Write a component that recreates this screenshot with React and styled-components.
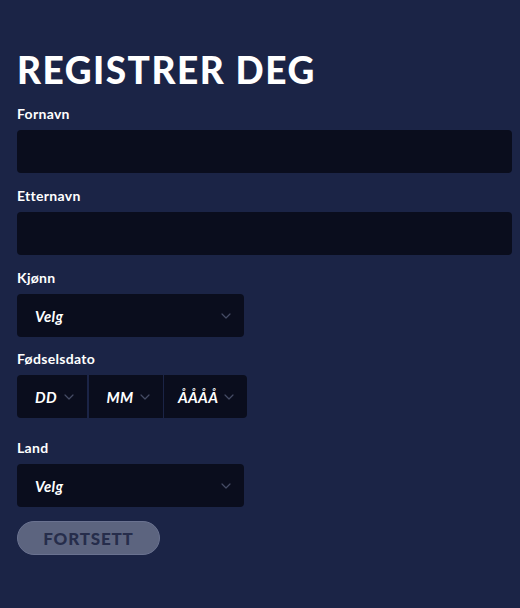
import React from "react";
import styled, { createGlobalStyle } from "styled-components";

const Global = createGlobalStyle`
  html, body { margin: 0; padding: 0; background: #1b2446; }
  body { font-family: Lato, "Noto Sans", sans-serif; color: #ffffff; }
  * { box-sizing: border-box; }
`;

const Page = styled.div`
  min-height: 608px;
  background: #1b2446;
  padding: 48px 8px 40px 17px;
`;

const Title = styled.h1`
  margin: 0 0 13px;
  font-size: 37px;
  line-height: 44px;
  font-weight: 900;
  letter-spacing: 1.5px;
  color: #ffffff;
`;

const Field = styled.div`
  display: flex;
  flex-direction: column;
  align-items: flex-start;
  margin-bottom: ${(p) => p.$mb ?? 14}px;
`;

const Label = styled.label`
  font-size: 14px;
  line-height: 18px;
  font-weight: 700;
  letter-spacing: 0.3px;
  color: #ffffff;
  margin-bottom: 7px;
`;

const TextInput = styled.input`
  width: 100%;
  height: 43px;
  border: none;
  border-radius: 4px;
  background: #0a0d1d;
  color: #ffffff;
  font: inherit;
  padding: 0 18px;
  outline: none;
`;

const SelectBox = styled.div`
  display: flex;
  align-items: center;
  justify-content: space-between;
  width: ${(p) => (p.$w ? `${p.$w}px` : "auto")};
  height: 43px;
  background: #0a0d1d;
  border-radius: ${(p) => p.$radius || "4px"};
  padding: 0 ${(p) => p.$pr ?? 13}px 0 ${(p) => p.$pl ?? 18}px;
  gap: 6px;

  svg { flex-shrink: 0; }
`;

const SelectText = styled.span`
  font-size: 15px;
  font-style: italic;
  font-weight: 700;
  letter-spacing: 0.3px;
  color: #ffffff;
  white-space: nowrap;
`;

const DateRow = styled.div`
  display: flex;
  gap: 1.5px;
`;

const Button = styled.button`
  width: 143px;
  height: 34px;
  border-radius: 17px;
  border: 1px solid #6a7290;
  background: #5c647f;
  color: #262d4b;
  font-family: Lato, "Noto Sans", sans-serif;
  font-weight: 900;
  font-size: 17px;
  letter-spacing: 0.8px;
  padding: 0;
  cursor: default;
`;

const Chevron = () => (
  <svg width="10" height="6" viewBox="0 0 10 6" fill="none">
    <path d="M1 1 L5 5 L9 1" stroke="#454b64" strokeWidth="1.2" strokeLinecap="round" strokeLinejoin="round" />
  </svg>
);

const Select = ({ text, ...rest }) => (
  <SelectBox {...rest}>
    <SelectText>{text}</SelectText>
    <Chevron />
  </SelectBox>
);

export default function App() {
  return (
    <>
      <Global />
      <Page>
        <Title>REGISTRER DEG</Title>
        <Field>
          <Label>Fornavn</Label>
          <TextInput />
        </Field>
        <Field>
          <Label>Etternavn</Label>
          <TextInput />
        </Field>
        <Field $mb={13}>
          <Label>Kjønn</Label>
          <Select text="Velg" $w={227} />
        </Field>
        <Field $mb={21}>
          <Label>Fødselsdato</Label>
          <DateRow>
            <Select text="DD" $w={70} $radius="4px 0 0 4px" />
            <Select text="MM" $w={74} $radius="0" />
            <Select text="ÅÅÅÅ" $w={83} $radius="0 4px 4px 0" $pl={14} />
          </DateRow>
        </Field>
        <Field>
          <Label>Land</Label>
          <Select text="Velg" $w={227} />
        </Field>
        <Button>FORTSETT</Button>
      </Page>
    </>
  );
}
